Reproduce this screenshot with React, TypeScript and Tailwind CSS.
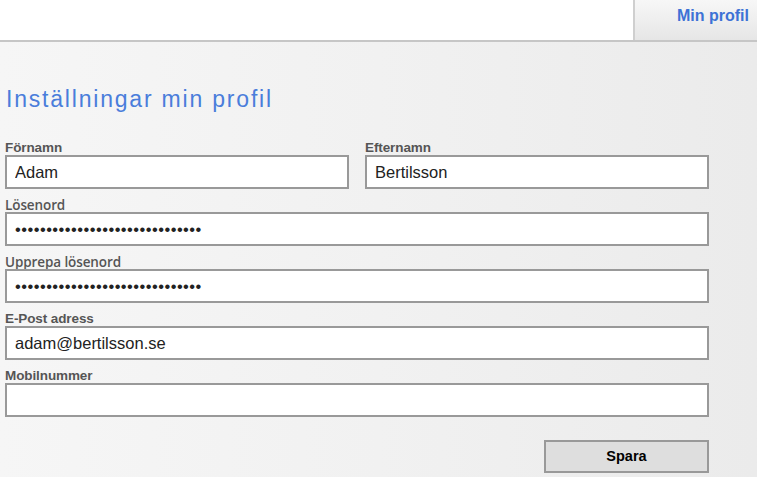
import React from "react";

function Field({
  label,
  value = "",
  type = "text",
  labelClass = "font-['Liberation_Sans',Arial,sans-serif] text-[13.5px] font-bold tracking-[-0.1px]",
}: {
  label: string;
  value?: string;
  type?: string;
  labelClass?: string;
}) {
  return (
    <div className="flex flex-col">
      <label className={`h-[14px] leading-[14px] text-[#555] ${labelClass}`}>
        {label}
      </label>
      <input
        type={type}
        readOnly
        defaultValue={value}
        className={`h-[34px] w-full border-2 border-[#999] bg-white px-[8px] font-['Liberation_Sans',Arial,sans-serif] text-[16.5px] text-[#222] outline-none ${
          type === "password" ? "tracking-[0.45px]" : ""
        }`}
      />
    </div>
  );
}

export default function App() {
  const pw = "a".repeat(30);
  const openLabel =
    "font-['Open_Sans',sans-serif] text-[13.5px] font-semibold tracking-[-0.1px]";

  return (
    <div className="min-h-[477px] w-[757px] overflow-hidden bg-gradient-to-r from-[#f6f6f6] via-[#f1f1f1] to-[#ebebeb] font-['Liberation_Sans',Arial,sans-serif]">
      <header className="flex h-[42px] justify-end border-b-2 border-[#c6c6c6] bg-white">
        <div className="flex w-[124px] justify-end border-l-2 border-[#cfcfcf] bg-gradient-to-b from-[#f7f7f7] to-[#e6e6e6] pr-[8px] pt-[4px]">
          <span className="text-[16px] font-bold text-[#3d72d6]">Min profil</span>
        </div>
      </header>

      <main className="w-[709px] pl-[5px] pt-[44px]">
        <h1 className="pl-[1px] text-[23px] leading-[26px] tracking-[1.8px] text-[#4a7ddb]">
          Inställningar min profil
        </h1>

        <div className="mt-[29px] flex flex-col gap-[9px]">
          <div className="grid grid-cols-2 gap-[16px]">
            <Field label="Förnamn" value="Adam" />
            <Field label="Efternamn" value="Bertilsson" />
          </div>
          <Field label="Lösenord" value={pw} type="password" labelClass={openLabel} />
          <Field label="Upprepa lösenord" value={pw} type="password" labelClass={openLabel} />
          <Field label="E-Post adress" value="adam@bertilsson.se" />
          <Field label="Mobilnummer" />
        </div>

        <div className="mt-[23px] flex justify-end">
          <button className="h-[33px] w-[165px] border-2 border-[#999] bg-[#dedede] text-[14.5px] font-bold text-black">
            Spara
          </button>
        </div>
      </main>
    </div>
  );
}
